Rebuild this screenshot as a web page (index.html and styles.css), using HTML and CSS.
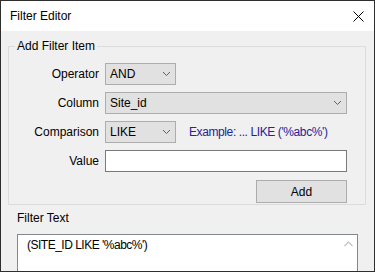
FILE: index.html
```html
<!DOCTYPE html>
<html lang="en">
<head>
    <meta charset="UTF-8">
    <title>Filter Editor</title>
    <link rel="stylesheet" href="styles.css">
</head>
<body>
    <div class="window">
        <div class="titlebar">
            <span class="title">Filter Editor</span>
            <svg class="close" width="11" height="11" viewBox="0 0 11 11">
                <path d="M0.5 0.5 L10.5 10.5 M10.5 0.5 L0.5 10.5" stroke="#000" stroke-width="1" fill="none"/>
            </svg>
        </div>

        <div class="content">
            <fieldset class="group">
                <legend>Add Filter Item</legend>
                <div class="form">
                    <label>Operator</label>
                    <div class="select short">
                        <span>AND</span>
                        <svg class="chevron" width="7" height="4" viewBox="0 0 7 4"><path d="M0 0 L3.5 3.5 L7 0" stroke="#606060" fill="none"/></svg>
                    </div>

                    <label>Column</label>
                    <div class="select">
                        <span>Site_id</span>
                        <svg class="chevron" width="7" height="4" viewBox="0 0 7 4"><path d="M0 0 L3.5 3.5 L7 0" stroke="#606060" fill="none"/></svg>
                    </div>

                    <label>Comparison</label>
                    <div class="field-row">
                        <div class="select short">
                            <span>LIKE</span>
                            <svg class="chevron" width="7" height="4" viewBox="0 0 7 4"><path d="M0 0 L3.5 3.5 L7 0" stroke="#606060" fill="none"/></svg>
                        </div>
                        <span class="hint">Example: ... LIKE ('%abc%')</span>
                    </div>

                    <label>Value</label>
                    <div class="input"></div>

                    <span></span>
                    <div class="actions">
                        <button class="btn">Add</button>
                    </div>
                </div>
            </fieldset>

            <div class="section-label">Filter Text</div>
            <div class="filter-text">
                <span class="filter-value">(SITE_ID LIKE '%abc%')</span>
                <div class="scrollbar">
                    <svg width="9" height="6" viewBox="0 0 9 6"><path d="M0.5 5 L4.5 1 L8.5 5" stroke="#c2c2c2" stroke-width="1.2" fill="none"/></svg>
                </div>
            </div>
        </div>
    </div>
</body>
</html>
```

FILE: styles.css
```css
body {
    margin: 0;
    font-family: "Segoe UI", "Liberation Sans", Arial, sans-serif;
    font-size: 12px;
    color: #000;
}
.window {
    box-sizing: border-box;
    width: 375px;
    height: 272px;
    border: 1px solid #2e2e2e;
    background: #f0f0f0;
    overflow: hidden;
}
.titlebar {
    height: 30px;
    background: #fff;
    display: flex;
    align-items: center;
    padding: 0 10px 0 9px;
}
.title {
    flex: 1;
    line-height: 14px;
}
.close {
    display: block;
}
.group {
    box-sizing: border-box;
    width: 358px;
    margin: 8px 0 0 7px;
    padding: 10px 18px 1px 0;
    border: 1px solid #dcdcdc;
}
.group legend {
    margin-left: 6px;
    padding: 0 2px;
    line-height: 14px;
}
.form {
    display: grid;
    grid-template-columns: 90px 1fr;
    column-gap: 6px;
    row-gap: 7px;
    align-items: center;
}
.form label {
    text-align: right;
    line-height: 14px;
}
.select {
    box-sizing: border-box;
    height: 22px;
    background: #e1e1e1;
    border: 1px solid #adadad;
    display: flex;
    align-items: center;
    padding: 0 5px 0 4px;
}
.select span {
    flex: 1;
}
.select.short {
    width: 71px;
}
.chevron {
    display: block;
}
.field-row {
    display: flex;
    align-items: center;
}
.hint {
    margin-left: 13px;
    color: #24249a;
    letter-spacing: -0.4px;
}
.input {
    box-sizing: border-box;
    height: 22px;
    background: #fff;
    border: 1px solid #7a7a7a;
}
.actions {
    display: flex;
    justify-content: flex-end;
    margin-top: 1px;
}
.btn {
    box-sizing: border-box;
    width: 91px;
    height: 23px;
    background: #e1e1e1;
    border: 1px solid #adadad;
    font-family: inherit;
    font-size: 12px;
    color: #000;
    padding: 0;
}
.section-label {
    margin: 6px 0 0 16px;
    line-height: 14px;
}
.filter-text {
    box-sizing: border-box;
    width: 341px;
    height: 60px;
    margin: 9px 0 0 16px;
    background: #fff;
    border: 1px solid #828790;
    display: flex;
}
.filter-value {
    flex: 1;
    padding: 3px 0 0 9px;
    line-height: 14px;
    letter-spacing: -0.5px;
}
.scrollbar {
    width: 17px;
    display: flex;
    justify-content: center;
    padding-top: 6px;
    align-items: flex-start;
}
.scrollbar svg {
    display: block;
}
```
